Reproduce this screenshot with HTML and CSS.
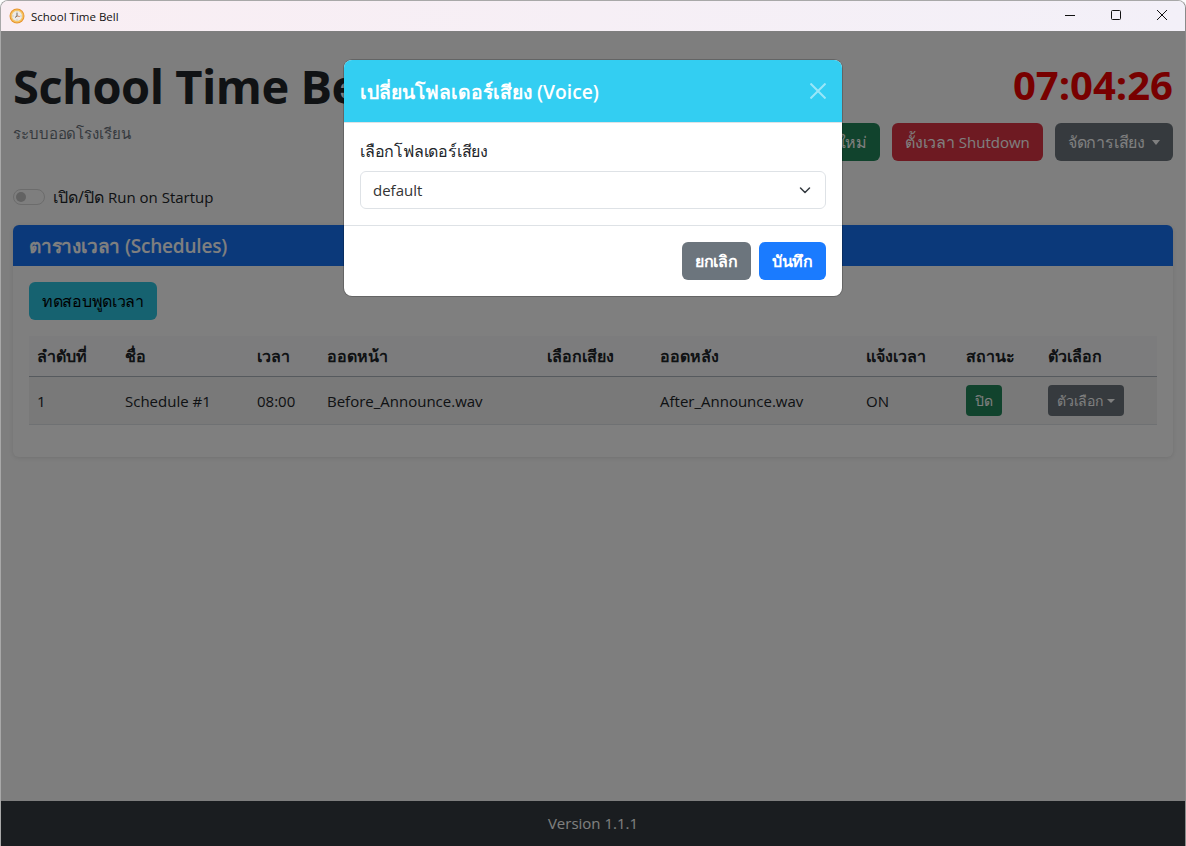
FILE: index.html
```html
<!DOCTYPE html>
<html lang="th">

<head>
    <meta charset="UTF-8">
    <meta name="viewport" content="width=device-width, initial-scale=1.0">
    <title>School Time Bell</title>
    <link rel="stylesheet" href="styles.css">
</head>

<body>
    <div class="window">

        <div class="titlebar">
            <svg class="app-icon" viewBox="0 0 16 16" width="16" height="16">
                <circle cx="8" cy="8" r="7.500" fill="#e8952f"/>
                <circle cx="8" cy="8" r="6.500" fill="#f5c565"/>
                <circle cx="8" cy="8" r="5" fill="#eeebe6"/>
                <path d="M8 3.500v1M8 11.500v1M3.500 8h1M11.500 8h1" stroke="#a9a399" stroke-width="0.800" fill="none"/>
                <path d="M8 4.800V8l-2 1.500" fill="none" stroke="#6f6a60" stroke-width="1"/>
                <path d="M8 8l2.800.5" fill="none" stroke="#c9703a" stroke-width="0.800"/>
            </svg>
            <span class="app-name">School Time Bell</span>
            <div class="win-controls">
                <svg viewBox="0 0 46 30" width="46" height="30"><path d="M18 14.5h10" stroke="#111" fill="none"/></svg>
                <svg viewBox="0 0 46 30" width="46" height="30"><rect x="18.5" y="9.5" width="9" height="9" rx="1" stroke="#111" fill="none"/></svg>
                <svg viewBox="0 0 46 30" width="46" height="30"><path d="M18 9l10 10M28 9L18 19" stroke="#111" fill="none"/></svg>
            </div>
        </div>

        <div class="app">
            <div class="content">
                <div class="header">
                    <div>
                        <h1>School Time Bell</h1>
                        <p class="subtitle">ระบบออดโรงเรียน</p>
                    </div>
                    <div class="header-right">
                        <div class="clock">07:04:26</div>
                        <div class="actions">
                            <button class="btn btn-success">เพิ่มตารางใหม่</button>
                            <button class="btn btn-danger">ตั้งเวลา <span class="en">Shutdown</span></button>
                            <button class="btn btn-secondary caret">จัดการเสียง</button>
                        </div>
                    </div>
                </div>

                <div class="switch-row">
                    <span class="switch"></span>
                    <label>เปิด/ปิด <span class="en">Run on Startup</span></label>
                </div>

                <div class="card">
                    <div class="card-header">ตารางเวลา (Schedules)</div>
                    <div class="card-body">
                        <button class="btn btn-info">ทดสอบพูดเวลา</button>
                        <table>
                            <thead>
                                <tr>
                                    <th class="col-no">ลำดับที่</th>
                                    <th class="col-name">ชื่อ</th>
                                    <th class="col-time">เวลา</th>
                                    <th class="col-before">ออดหน้า</th>
                                    <th class="col-voice">เลือกเสียง</th>
                                    <th class="col-after">ออดหลัง</th>
                                    <th class="col-speak">แจ้งเวลา</th>
                                    <th class="col-status">สถานะ</th>
                                    <th>ตัวเลือก</th>
                                </tr>
                            </thead>
                            <tbody>
                                <tr>
                                    <td class="en">1</td>
                                    <td class="en">Schedule #1</td>
                                    <td class="en">08:00</td>
                                    <td class="en">Before_Announce.wav</td>
                                    <td></td>
                                    <td class="en">After_Announce.wav</td>
                                    <td class="en">ON</td>
                                    <td><button class="btn btn-sm btn-success">ปิด</button></td>
                                    <td><button class="btn btn-sm btn-secondary caret">ตัวเลือก</button></td>
                                </tr>
                            </tbody>
                        </table>
                    </div>
                </div>
            </div>

            <div class="footer en">Version 1.1.1</div>

            <!-- Modal -->
            <div class="backdrop"></div>
            <div class="modal">
                <div class="modal-header">
                    <h5>เปลี่ยนโฟลเดอร์เสียง (Voice)</h5>
                    <svg class="modal-close" viewBox="0 0 16 16" width="16" height="16">
                        <path d="M.5.5l15 15M15.500.5l-15 15" stroke="#fff" stroke-width="2" fill="none"/>
                    </svg>
                </div>
                <div class="modal-body">
                    <label>เลือกโฟลเดอร์เสียง</label>
                    <div class="select">
                        <span class="en">default</span>
                        <svg viewBox="0 0 12 12" width="12" height="12">
                            <path d="M1.500 4l4.500 4.500L10.500 4" stroke="#343a40" stroke-width="1.500" stroke-linecap="round" stroke-linejoin="round" fill="none"/>
                        </svg>
                    </div>
                </div>
                <div class="modal-footer">
                    <button class="btn btn-modal-grey">ยกเลิก</button>
                    <button class="btn btn-primary">บันทึก</button>
                </div>
            </div>
        </div>

    </div>
</body>

</html>
```

FILE: styles.css
```css
* {
    box-sizing: border-box;
}

html, body {
    margin: 0;
    height: 100%;
}

body {
    font-family: "Open Sans", "Noto Sans", "DejaVu Sans", sans-serif;
    font-size: 16px;
    color: #212529;
    background: #fcfcfc;
}

/* latin text runs wider than the thai at the same size */
.en {
    font-size: 15px;
}

.window {
    width: 1186px;
    height: 846px;
    display: flex;
    flex-direction: column;
    border-top: 1px solid #a8a8a8;
    border-left: 1px solid #a8a8a8;
    border-right: 1px solid #8a8a8a;
    border-radius: 8px 8px 0 0;
    overflow: hidden;
}

/* title bar */
.titlebar {
    height: 30px;
    display: flex;
    align-items: center;
    padding-left: 8px;
    background: linear-gradient(90deg, #f9eef3, #f3f0f8);
    font-size: 11.5px;
    color: #111;
}

.app-name {
    margin-left: 6px;
}

.win-controls {
    margin-left: auto;
    display: flex;
}

/* page */
.app {
    flex: 1;
    position: relative;
    display: flex;
    flex-direction: column;
}

.content {
    flex: 1;
    padding: 0 12px;
}

.header {
    display: flex;
    justify-content: space-between;
    padding-top: 24px;
}

h1 {
    margin: 0;
    font-size: 47px;
    line-height: 62px;
    font-weight: 700;
    letter-spacing: -0.5px;
}

.subtitle {
    margin: 2px 0 0;
    font-size: 15px;
    line-height: 28px;
    letter-spacing: -0.1px;
    color: #6c757d;
}

.header-right {
    display: flex;
    flex-direction: column;
    align-items: flex-end;
}

.clock {
    font-size: 40px;
    line-height: 60px;
    font-weight: 700;
    color: #f00000;
}

.actions {
    display: flex;
    gap: 12px;
    margin-top: 8px;
}

.btn {
    font-family: inherit;
    font-size: 16px;
    line-height: 24px;
    padding: 6px 12px;
    border: 1px solid transparent;
    border-radius: 6px;
    color: #fff;
    letter-spacing: -0.2px;
}

.btn .en {
    letter-spacing: 0;
}

.btn-success { background: #23875a; }
.btn-danger { background: #dc3545; }
.btn-secondary { background: #6c757d; }
.btn-info { background: #2cc4e0; color: #000; letter-spacing: -0.3px; }
.btn-primary { background: #1a7bff; font-weight: 600; }
.btn-modal-grey { background: #6c757d; font-weight: 600; }

.btn-sm {
    font-size: 14px;
    line-height: 21px;
    padding: 4px 8px;
    border-radius: 4px;
}

.caret::after {
    content: "";
    display: inline-block;
    margin-left: 7px;
    vertical-align: 3px;
    border-top: 5px solid;
    border-left: 4.5px solid transparent;
    border-right: 4.5px solid transparent;
}

.btn-sm.caret::after {
    margin-left: 4px;
    border-top-width: 4px;
    border-left-width: 4px;
    border-right-width: 4px;
}

.switch-row {
    display: flex;
    align-items: center;
    gap: 8px;
    margin-top: 24px;
    height: 24px;
}

.switch {
    width: 32px;
    height: 16px;
    border: 1px solid #d8d8d8;
    border-radius: 8px;
    position: relative;
}

.switch::before {
    content: "";
    position: absolute;
    left: 2px;
    top: 2px;
    width: 10px;
    height: 10px;
    border-radius: 50%;
    background: #c4c4c4;
}

/* card */
.card {
    margin-top: 16px;
    border-radius: 6px;
    box-shadow: 0 1px 4px rgba(0, 0, 0, 0.1);
    background: #fff;
}

.card-header {
    height: 41px;
    padding: 1px 16px 0;
    background: #1672f5;
    color: #fff;
    font-size: 19px;
    font-weight: 600;
    line-height: 40px;
    letter-spacing: -0.2px;
    border-radius: 6px 6px 0 0;
}

.card-body {
    padding: 16px 16px 32px;
}

table {
    width: 100%;
    margin-top: 16px;
    border-collapse: collapse;
    table-layout: fixed;
}

th, td {
    padding: 8px;
    text-align: left;
}

th {
    line-height: 24px;
    font-weight: 700;
    background: #f8f9fa;
    border-bottom: 1px solid #adb5bd;
}

td {
    height: 48px;
    background: #f2f2f2;
    border-bottom: 1px solid #dee2e6;
}

.col-no { width: 88px; }
.col-name { width: 132px; }
.col-time { width: 70px; }
.col-before { width: 220px; }
.col-voice { width: 113px; }
.col-after { width: 206px; }
.col-speak { width: 100px; }
.col-status { width: 82px; }

.footer {
    height: 45px;
    line-height: 45px;
    text-align: center;
    background: #343a40;
    color: #fff;
}

/* modal */
.backdrop {
    position: absolute;
    inset: 0;
    background: rgba(0, 0, 0, 0.5);
}

.modal {
    position: absolute;
    left: 343px;
    top: 29px;
    width: 498px;
    height: 236px;
    background: #fff;
    border-radius: 8px;
    box-shadow: 0 0 0 1px rgba(0, 0, 0, 0.2);
    overflow: hidden;
    display: flex;
    flex-direction: column;
}

.modal-header {
    height: 62px;
    padding: 0 16px;
    display: flex;
    align-items: center;
    justify-content: space-between;
    background: #33cef2;
    color: #fff;
}

.modal-header h5 {
    margin: 2px 0 0;
    font-size: 19.25px;
    font-weight: 600;
}

.modal-close {
    opacity: 0.5;
}

.modal-body {
    flex: 1;
    padding: 16px;
    border-top: 1px solid #dee2e6;
}

.modal-body label {
    display: block;
    line-height: 24px;
    margin-bottom: 8px;
    letter-spacing: -0.2px;
}

.select {
    height: 38px;
    border: 1px solid #dee2e6;
    border-radius: 6px;
    padding: 0 14px 0 12px;
    display: flex;
    align-items: center;
    justify-content: space-between;
    color: #333;
}

.modal-footer {
    height: 71px;
    padding: 0 16px;
    display: flex;
    align-items: center;
    justify-content: flex-end;
    gap: 8px;
    border-top: 1px solid #dee2e6;
}
```
